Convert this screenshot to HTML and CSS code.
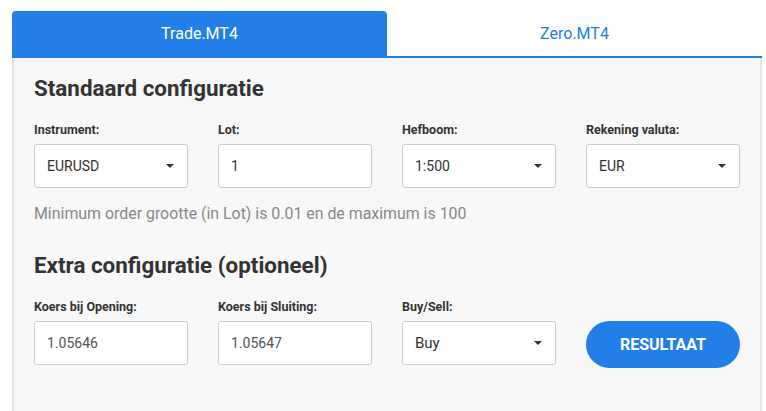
FILE: index.html
```html
<!DOCTYPE html>
<html>
<head>
<meta charset="utf-8">
<link rel="stylesheet" href="styles.css">
</head>
<body>
<div class="wrap">
  <div class="tabs">
    <div class="tab active">Trade.MT4</div>
    <div class="tab">Zero.MT4</div>
  </div>
  <div class="panel">
    <h2 class="title">Standaard configuratie</h2>
    <div class="row">
      <div class="field">
        <label>Instrument:</label>
        <div class="box select">EURUSD<span class="caret"></span></div>
      </div>
      <div class="field">
        <label>Lot:</label>
        <div class="box">1</div>
      </div>
      <div class="field">
        <label>Hefboom:</label>
        <div class="box select">1:500<span class="caret"></span></div>
      </div>
      <div class="field">
        <label>Rekening valuta:</label>
        <div class="box select">EUR<span class="caret"></span></div>
      </div>
    </div>
    <p class="hint">Minimum order grootte (in Lot) is 0.01 en de maximum is 100</p>
    <h2 class="title title2">Extra configuratie (optioneel)</h2>
    <div class="row">
      <div class="field">
        <label>Koers bij Opening:</label>
        <div class="box muted">1.05646</div>
      </div>
      <div class="field">
        <label>Koers bij Sluiting:</label>
        <div class="box muted">1.05647</div>
      </div>
      <div class="field">
        <label>Buy/Sell:</label>
        <div class="box select buy">Buy<span class="caret"></span></div>
      </div>
      <div class="field btnfield">
        <button class="btn">RESULTAAT</button>
      </div>
    </div>
  </div>
</div>
</body>
</html>
```
FILE: styles.css
```css
* { box-sizing: border-box; }
html, body { margin: 0; padding: 0; background: #fff; }
body { font-family: Roboto, "Liberation Sans", sans-serif; color: #333; }
.wrap { width: 750px; margin: 11px 0 0 12px; }
.tabs { display: flex; border-bottom: 2px solid #237fe8; }
.tab {
  flex: 1; height: 45px; display: flex; align-items: center; justify-content: center;
  font-size: 16px; color: #237fe8;
}
.tab.active { background: #237fe8; color: #fff; border-radius: 4px 4px 0 0; }
.panel {
  background: #f8f8f8; border-left: 2px solid #e6e6e6; border-right: 2px solid #e6e6e6;
  padding: 16px 20px 60px 20px; min-height: 360px;
}
.title { margin: 0; font-size: 22.4px; font-weight: 700; color: #333; line-height: 28px; }
.title2 { margin-top: 27px; }
.row { display: flex; gap: 30px; margin-top: 21px; }
.field { width: 154px; display: flex; flex-direction: column; }
label { font-size: 12.5px; font-weight: 700; color: #333; line-height: 14px; margin-bottom: 7px; }
.box {
  height: 44px; background: #fff; border: 1px solid #ccc; border-radius: 3px;
  display: flex; align-items: center; padding: 0 12px; font-size: 14px; color: #333;
  position: relative;
}
.box.muted { color: #555; }
.box.buy { font-size: 15px; }
.caret {
  position: absolute; right: 13px; top: 19px; width: 0; height: 0;
  border-left: 4px solid transparent; border-right: 4px solid transparent; border-top: 4px solid #333;
}
.hint { margin: 16px 0 0; font-size: 15.9px; color: #888; line-height: 20px; }
.btnfield { justify-content: flex-end; }
.btn {
  height: 47px; width: 154px; border: none; border-radius: 24px; background: #237fe8;
  color: #fff; font-family: Roboto, "Liberation Sans", sans-serif; font-weight: 700; font-size: 16px;
  margin-bottom: -3px; padding: 0;
}
```
